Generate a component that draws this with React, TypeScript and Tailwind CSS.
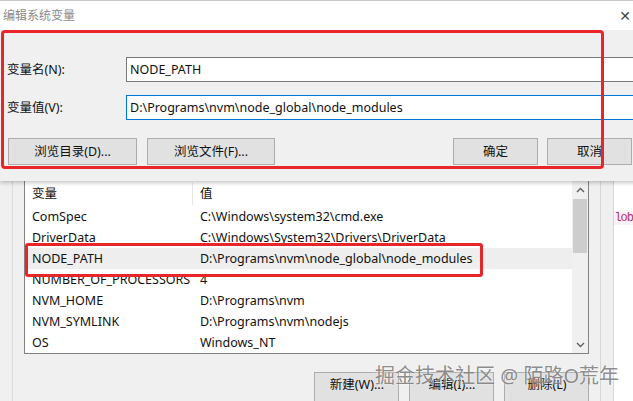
const rows = [
  { name: "ComSpec", value: "C:\\Windows\\system32\\cmd.exe" },
  { name: "DriverData", value: "C:\\Windows\\System32\\Drivers\\DriverData" },
  { name: "NODE_PATH", value: "D:\\Programs\\nvm\\node_global\\node_modules", active: true },
  { name: "NUMBER_OF_PROCESSORS", value: "4" },
  { name: "NVM_HOME", value: "D:\\Programs\\nvm" },
  { name: "NVM_SYMLINK", value: "D:\\Programs\\nvm\\nodejs" },
  { name: "OS", value: "Windows_NT" },
];

function WinButton({ label, className }: { label: string; className: string }) {
  return (
    <div className={`flex items-center justify-center bg-[#e1e1e1] border border-[#adadad] ${className}`}>
      {label}
    </div>
  );
}

function Chevron({ up }: { up?: boolean }) {
  return (
    <svg width="9" height="6" viewBox="0 0 9 6" className="text-[#606060]">
      <path d={up ? "M1 5 L4.5 1.5 L8 5" : "M1 1 L4.5 4.5 L8 1"} fill="none" stroke="currentColor" strokeWidth="1.4" />
    </svg>
  );
}

export default function App() {
  return (
    <div className="relative w-[633px] h-[401px] overflow-hidden bg-[#f0f0f0] text-[12.5px] leading-[16px] text-[#111] font-['Noto_Sans','Noto_Sans_CJK_SC',sans-serif]">
      {/* edit dialog */}
      <div className="relative z-10 w-[660px] shadow-[0_2px_4px_rgba(0,0,0,0.22)]">
        <div className="w-[633px] h-[30px] bg-white border-t border-[#c8c8c8] flex items-center justify-between pl-[3px] pr-[2px]">
          <span className="text-[12px] text-[#8a8a8a]">编辑系统变量</span>
          <span className="text-[14px] leading-[14px] text-[#444] font-['DejaVu_Sans',sans-serif]">✕</span>
        </div>
        <div className="h-[151px] bg-[#f0f0f0] flex flex-col pt-[27px] pl-[7px]">
          <div className="flex items-center h-[25px]">
            <span className="w-[119px]">变量名(N):</span>
            <div className="w-[520px] h-[25px] bg-white border border-[#7a7a7a] flex items-center pl-[3px]">NODE_PATH</div>
          </div>
          <div className="flex items-center h-[25px] mt-[13px]">
            <span className="w-[119px]">变量值(V):</span>
            <div className="w-[520px] h-[25px] bg-white border border-[#0078d7] flex items-center pl-[3px]">
              D:\Programs\nvm\node_global\node_modules
            </div>
          </div>
          <div className="flex h-[27px] mt-[18px] ml-[1px]">
            <WinButton label="浏览目录(D)..." className="w-[129px]" />
            <WinButton label="浏览文件(F)..." className="w-[128px] ml-[10px]" />
            <WinButton label="确定" className="w-[85px] ml-[178px]" />
            <WinButton label="取消" className="w-[85px] ml-[9px]" />
          </div>
        </div>
      </div>

      {/* environment variables window behind */}
      <div className="flex h-[220px]">
        <div className="w-[13px] border-r border-[#dcdcdc]" />
        <div className="w-[11px]" />
        <div className="w-[567px] flex flex-col">
          <div className="h-[174px] bg-white border border-t-0 border-[#828282] flex">
            <div className="flex-1 flex flex-col">
              <div className="h-[25px] flex items-center">
                <span className="w-[168px] h-[22px] pl-[7px] flex items-center border-r border-[#e5e5e5]">变量</span>
                <span className="pl-[7px]">值</span>
              </div>
              {rows.map((r) => (
                <div key={r.name} className={`h-[21px] flex items-center ${r.active ? "bg-[#eeeeee]" : ""}`}>
                  <span className="w-[168px] pl-[7px] whitespace-nowrap overflow-hidden">{r.name}</span>
                  <span className="pl-[7px] whitespace-nowrap">{r.value}</span>
                </div>
              ))}
            </div>
            <div className="w-[16px] bg-[#f0f0f0] flex flex-col items-center">
              <div className="h-[17px] flex items-center justify-center">
                <Chevron up />
              </div>
              <div className="w-[14px] h-[54px] mt-[1px] bg-[#cdcdcd]" />
              <div className="flex-1" />
              <div className="h-[17px] flex items-center justify-center">
                <Chevron />
              </div>
            </div>
          </div>
          <div className="flex justify-end gap-[10px] mt-[18px]">
            <WinButton label="新建(W)..." className="w-[85px] h-[30px] !items-start pt-[4px]" />
            <WinButton label="编辑(I)..." className="w-[85px] h-[30px] !items-start pt-[4px]" />
            <WinButton label="删除(L)" className="w-[85px] h-[30px] !items-start pt-[4px]" />
          </div>
        </div>
        <div className="w-[12px] border-r border-[#d6d6d6]" />
        <div className="w-[13px] border-r border-[#d6d6d6]" />
        <div className="flex-1 bg-white pt-[28px]">
          <span className="bg-[#f9f2f4] text-[#b3306b] text-[12px] leading-[16px] tracking-[-1px] font-['Liberation_Mono',monospace] whitespace-nowrap">lob</span>
        </div>
      </div>

      {/* annotations */}
      <div className="absolute z-20 left-[1px] top-[30px] w-[603px] h-[139px] border-[3px] border-[#e8262a] rounded-[4px]" />
      <div className="absolute z-20 left-[25px] top-[243px] w-[458px] h-[34px] border-[3px] border-[#e8262a] rounded-[3px]" />

      {/* watermark */}
      <div className="absolute z-30 left-[375px] top-[366px] text-[20px] leading-[20px] whitespace-nowrap text-[rgba(105,105,105,0.75)] [text-shadow:0_0_2px_rgba(255,255,255,0.9)]">
        掘金技术社区 @ 陌路O荒年
      </div>
    </div>
  );
}
